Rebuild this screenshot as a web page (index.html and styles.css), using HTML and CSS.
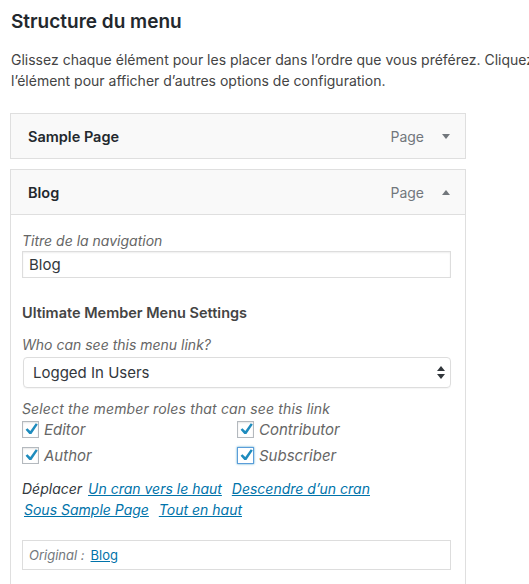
FILE: index.html
```html
<!DOCTYPE html>
<html lang="fr">
<head>
<meta charset="utf-8">
<title>Structure du menu</title>
<link rel="stylesheet" href="styles.css">
</head>
<body>
<div class="page">
  <h3 class="title">Structure du menu</h3>
  <p class="intro">Glissez chaque élément pour les placer dans l’ordre que vous préférez. Cliquez sur la flèche à droite de<br>l’élément pour afficher d’autres options de configuration.</p>

  <ul class="menu">
    <li class="item">
      <div class="item-bar">
        <span class="item-title">Sample Page</span>
        <span class="item-type">Page</span>
        <svg class="item-arrow" width="8" height="5" viewBox="0 0 8 5"><path d="M0 0H8L4 5Z" fill="#72777c"/></svg>
      </div>
    </li>
    <li class="item">
      <div class="item-bar">
        <span class="item-title">Blog</span>
        <span class="item-type">Page</span>
        <svg class="item-arrow" width="8" height="5" viewBox="0 0 8 5"><path d="M0 5H8L4 0Z" fill="#72777c"/></svg>
      </div>
      <div class="settings">
        <label class="field-label">Titre de la navigation</label>
        <div class="text-input">Blog</div>

        <h4 class="section-title">Ultimate Member Menu Settings</h4>
        <label class="field-label">Who can see this menu link?</label>
        <div class="select">
          <span>Logged In Users</span>
          <svg class="select-arrows" width="8" height="13" viewBox="0 0 8 13"><path d="M0 5H8L4 0Z M0 8H8L4 13Z" fill="#32373c"/></svg>
        </div>

        <label class="field-label roles-label">Select the member roles that can see this link</label>
        <div class="roles">
          <div class="role"><span class="check"><svg width="16" height="16" viewBox="0 0 16 16"><path d="M12.8 2.2l2 1.4-6.4 9.3H6.3L2.6 8.8l1.8-1.6 2.9 2.7z" fill="#1e8cbe"/></svg></span><span class="role-name">Editor</span></div>
          <div class="role"><span class="check"><svg width="16" height="16" viewBox="0 0 16 16"><path d="M12.8 2.2l2 1.4-6.4 9.3H6.3L2.6 8.8l1.8-1.6 2.9 2.7z" fill="#1e8cbe"/></svg></span><span class="role-name">Contributor</span></div>
          <div class="role"><span class="check"><svg width="16" height="16" viewBox="0 0 16 16"><path d="M12.8 2.2l2 1.4-6.4 9.3H6.3L2.6 8.8l1.8-1.6 2.9 2.7z" fill="#1e8cbe"/></svg></span><span class="role-name">Author</span></div>
          <div class="role"><span class="check check-focus"><svg width="16" height="16" viewBox="0 0 16 16"><path d="M12.8 2.2l2 1.4-6.4 9.3H6.3L2.6 8.8l1.8-1.6 2.9 2.7z" fill="#1e8cbe"/></svg></span><span class="role-name">Subscriber</span></div>
        </div>

        <div class="move">
          <div class="move-row"><span class="move-label">Déplacer</span> <a href="#" class="move-link">Un cran vers le haut</a> <a href="#" class="move-link">Descendre d’un cran</a></div>
          <div class="move-row"><a href="#" class="move-link">Sous Sample Page</a> <a href="#" class="move-link">Tout en haut</a></div>
        </div>

        <div class="original">
          <span class="original-label">Original :</span> <a href="#" class="original-link">Blog</a>
        </div>
      </div>
    </li>
  </ul>
</div>
</body>
</html>
```
FILE: styles.css
```css
html, body {
  margin: 0;
  padding: 0;
  background: #ffffff;
  overflow: hidden;
}

body {
  font-family: "Inter", "Noto Sans", sans-serif;
  color: #23282d;
  font-size: 14px;
  line-height: 21px;
}

.page {
  padding: 9px 0 0 11px;
}

.title {
  margin: 0;
  font-size: 19px;
  line-height: 26px;
  font-weight: 600;
  color: #23282d;
}

.intro {
  margin: 14px 0 0;
  white-space: nowrap;
  font-size: 14px;
  line-height: 21px;
  color: #444;
}

.menu {
  list-style: none;
  margin: 22px 0 0 -1px;
  padding: 0;
  width: 456px;
}

.item {
  margin: 0 0 10px;
}

.item-bar {
  box-sizing: border-box;
  height: 46px;
  display: flex;
  align-items: center;
  border: 1px solid #dfdfdf;
  background: #f9f9f9;
  padding: 0 15px 0 17px;
}

.item-title {
  flex: 1;
  font-size: 14.5px;
  font-weight: 600;
  color: #23282d;
}

.item-type {
  font-size: 14px;
  color: #72777c;
  margin-right: 18px;
}

.item-arrow {
  display: block;
}

.settings {
  border: 1px solid #dfdfdf;
  border-top: none;
  padding: 15px 14px 20px 11px;
}

.field-label {
  display: block;
  font-style: italic;
  font-size: 14px;
  line-height: 21px;
  color: #666;
}

.text-input {
  box-sizing: border-box;
  height: 27px;
  border: 1px solid #dddddd;
  box-shadow: inset 0 1px 2px rgba(0, 0, 0, 0.07);
  padding: 0 6px;
  font-size: 15px;
  line-height: 25px;
  color: #32373c;
}

.section-title {
  margin: 24px 0 11px;
  font-size: 14.5px;
  line-height: 21px;
  font-weight: 600;
  color: #444;
}

.select {
  box-sizing: border-box;
  margin: 2px 0 0 1px;
  height: 31px;
  display: flex;
  align-items: center;
  justify-content: space-between;
  border: 1px solid #dddddd;
  border-radius: 4px;
  padding: 0 5px 0 9px;
  font-size: 15px;
  color: #32373c;
  box-shadow: 0 1px 1px rgba(0, 0, 0, 0.04);
}

.select-arrows {
  display: block;
}

.roles-label {
  margin-top: 10px;
  letter-spacing: 0.15px;
}

.roles {
  display: grid;
  grid-template-columns: 215px 1fr;
  row-gap: 8px;
  margin-top: 1px;
}

.role {
  display: flex;
  align-items: center;
  height: 18px;
}

.check {
  box-sizing: border-box;
  width: 17px;
  height: 17px;
  border: 1px solid #b4b9be;
  background: #fff;
  box-shadow: inset 0 1px 2px rgba(0, 0, 0, 0.1);
  display: flex;
  align-items: center;
  justify-content: center;
  margin-right: 5px;
}

.check svg {
  display: block;
  flex: none;
}

.check-focus {
  border-color: #5b9dd9;
  box-shadow: 0 0 2px rgba(30, 140, 190, 0.8);
}

.role-name {
  font-style: italic;
  font-size: 15px;
  color: #666;
}

.move {
  margin-top: 14px;
  font-size: 14px;
  line-height: 21px;
  font-style: italic;
  white-space: nowrap;
}

.move-label {
  color: #32373c;
}

.move-link {
  color: #0073aa;
  text-decoration: underline;
  margin: 0 2px;
}

.move-link + .move-link {
  margin-left: 4px;
}

.original {
  margin-top: 20px;
  box-sizing: border-box;
  height: 30px;
  border: 1px solid #dddddd;
  padding: 0 6px;
  display: flex;
  align-items: center;
  font-size: 13px;
}

.original-label {
  font-style: italic;
  color: #72777c;
  margin-right: 6px;
}

.original-link {
  color: #0073aa;
  text-decoration: underline;
}
```
